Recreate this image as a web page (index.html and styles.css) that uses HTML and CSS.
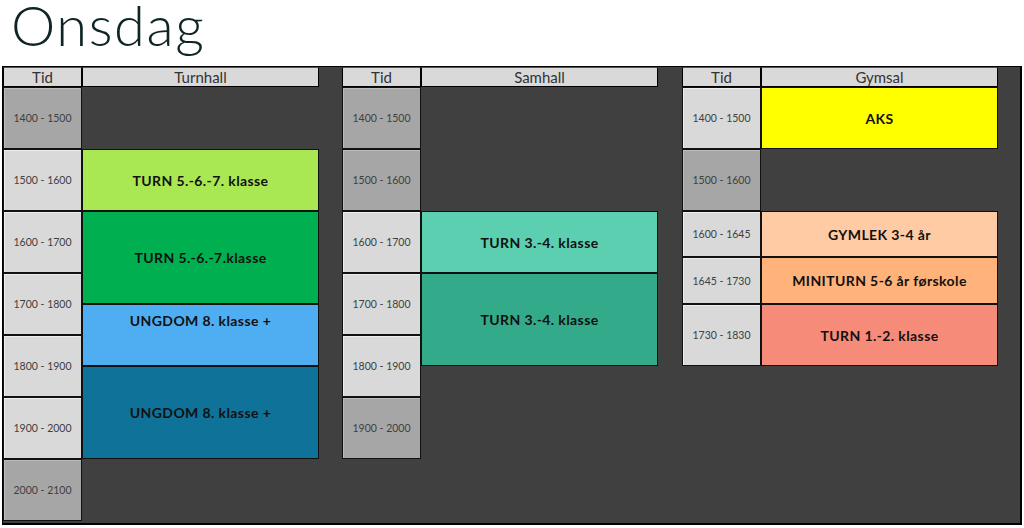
FILE: index.html
```html
<!DOCTYPE html>
<html lang="no">
<head>
  <meta charset="UTF-8" />
  <title>Onsdag</title>
  <link rel="stylesheet" href="styles.css">
</head>
<body>

<h1 class="day-title">Onsdag</h1>

<div class="board">

  <!-- Turnhall -->
  <div class="hall">
    <div class="tid-col">
      <div class="head">Tid</div>
      <div class="time off">1400 - 1500</div>
      <div class="time">1500 - 1600</div>
      <div class="time">1600 - 1700</div>
      <div class="time">1700 - 1800</div>
      <div class="time">1800 - 1900</div>
      <div class="time">1900 - 2000</div>
      <div class="time off">2000 - 2100</div>
    </div>
    <div class="event-col">
      <div class="head">Turnhall</div>
      <div class="gap h62"></div>
      <div class="event h62 lime">TURN 5.-6.-7. klasse</div>
      <div class="event h93 green">TURN 5.-6.-7.klasse</div>
      <div class="event h62 blue top">UNGDOM 8. klasse +</div>
      <div class="event h93 petrol">UNGDOM 8. klasse +</div>
    </div>
  </div>

  <!-- Samhall -->
  <div class="hall">
    <div class="tid-col">
      <div class="head">Tid</div>
      <div class="time off">1400 - 1500</div>
      <div class="time off">1500 - 1600</div>
      <div class="time">1600 - 1700</div>
      <div class="time">1700 - 1800</div>
      <div class="time">1800 - 1900</div>
      <div class="time off">1900 - 2000</div>
    </div>
    <div class="event-col">
      <div class="head">Samhall</div>
      <div class="gap h124"></div>
      <div class="event h62 mint">TURN 3.-4. klasse</div>
      <div class="event h93 sea">TURN 3.-4. klasse</div>
    </div>
  </div>

  <!-- Gymsal -->
  <div class="hall last">
    <div class="tid-col">
      <div class="head">Tid</div>
      <div class="time">1400 - 1500</div>
      <div class="time off">1500 - 1600</div>
      <div class="time h46">1600 - 1645</div>
      <div class="time h47">1645 - 1730</div>
      <div class="time">1730 - 1830</div>
    </div>
    <div class="event-col">
      <div class="head">Gymsal</div>
      <div class="event h62 yellow">AKS</div>
      <div class="gap h62"></div>
      <div class="event h46 peach">GYMLEK 3-4 år</div>
      <div class="event h47 orange">MINITURN 5-6 år førskole</div>
      <div class="event h62 salmon">TURN 1.-2. klasse</div>
    </div>
  </div>

</div>

</body>
</html>
```

FILE: styles.css
```css
* {
  box-sizing: border-box;
}
body {
  margin: 0;
  background: #fff;
  font-family: "Lato", "Open Sans", sans-serif;
}
.day-title {
  margin: 0;
  height: 66px;
  padding-top: 2px;
  padding-left: 11px;
  font-size: 56px;
  font-weight: 300;
  line-height: 46px;
  color: #0f2525;
  letter-spacing: 1.6px;
}
.board {
  display: flex;
  align-items: flex-start;
  gap: 23px;
  margin: 0 2px;
  height: 459px;
  background: #404040;
  border: 1px solid #000;
  border-right-width: 2px;
  border-bottom-width: 2px;
}
.hall {
  display: flex;
}
.hall.last {
  margin-left: 1px;
}
.tid-col {
  display: flex;
  flex-direction: column;
  width: 79px;
}
.event-col {
  display: flex;
  flex-direction: column;
  width: 237px;
}
.head {
  height: 20px;
  background: #d9d9d9;
  border: 1px solid #000;
  border-top-color: #555;
  text-align: center;
  font-size: 15px;
  line-height: 18px;
  color: #333;
}
.time {
  height: 62px;
  display: flex;
  align-items: center;
  justify-content: center;
  background: #d9d9d9;
  border: 1px solid #111;
  box-shadow: inset 1px 1px 0 #eee;
  font-size: 10.5px;
  color: #404040;
}
.time.off {
  background: #a6a6a6;
  box-shadow: inset 1px 1px 0 #bbb;
}
.event {
  display: flex;
  align-items: center;
  justify-content: center;
  border: 1px solid #111;
  font-size: 14px;
  font-weight: 700;
  letter-spacing: 0.4px;
  color: #111;
}
.event.top {
  align-items: flex-start;
  padding-top: 7px;
}
.h46 { height: 46px; }
.h47 { height: 47px; }
.h62 { height: 62px; }
.h93 { height: 93px; }
.h124 { height: 124px; }

.lime { background: #a9e853; }
.green { background: #00b050; }
.blue { background: #4fadf2; }
.petrol { background: #0f7299; }
.mint { background: #5ccfb0; }
.sea { background: #33aa8a; }
.yellow { background: #ffff00; }
.peach { background: #ffcba4; }
.orange { background: #ffb27a; }
.salmon { background: #f78b7a; }
```
